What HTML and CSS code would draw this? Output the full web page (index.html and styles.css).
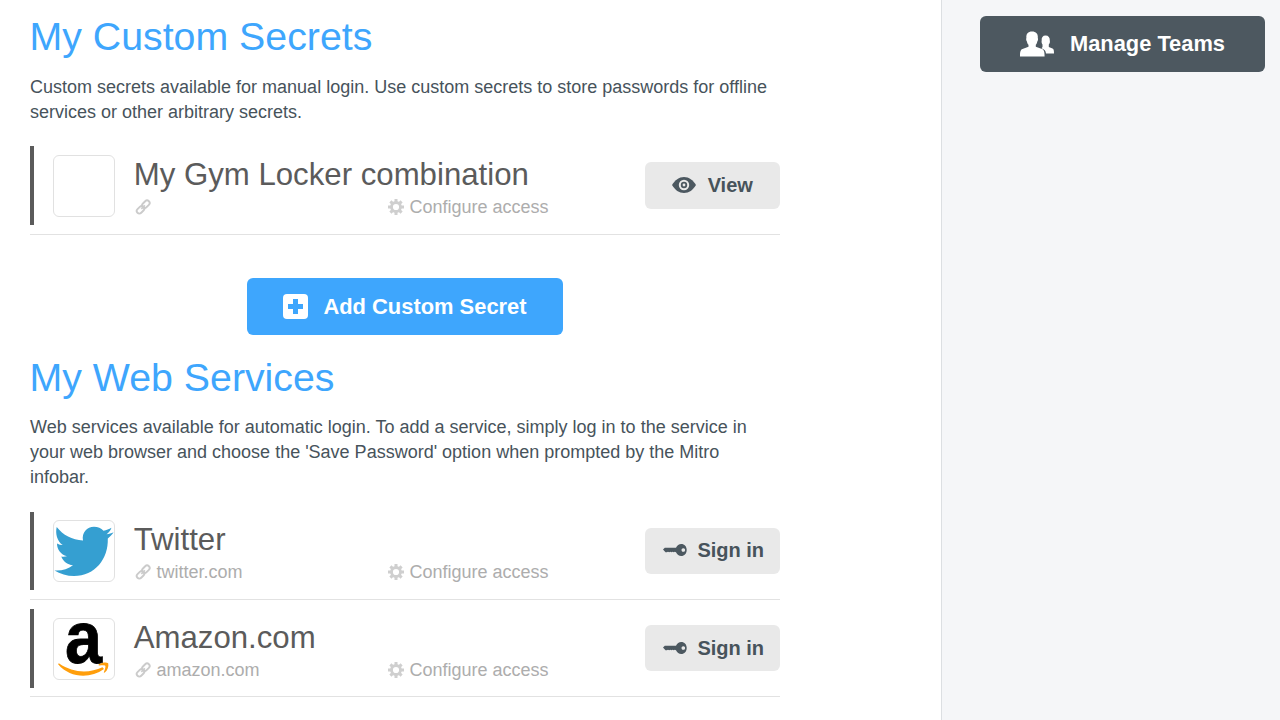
FILE: index.html
```html
<!DOCTYPE html>
<html lang="en">
<head>
<meta charset="utf-8">
<title>Secrets</title>
<link rel="stylesheet" href="styles.css">
</head>
<body>
<svg class="defs" width="0" height="0">
  <symbol id="link" viewBox="0 0 16 16">
    <g fill="none" stroke="#cbcbcb" stroke-width="1.900">
      <rect x="6.700" y="2.600" width="8.400" height="5.200" rx="2.600" transform="rotate(-45 10.900 5.200)"/>
      <rect x="1.300" y="8.200" width="8.400" height="5.200" rx="2.600" transform="rotate(-45 5.500 10.800)"/>
      <path d="M6.300 9.900l3.600-3.600" stroke-width="1.700"/>
    </g>
  </symbol>
  <symbol id="gear" viewBox="0 0 16 16">
    <circle cx="8" cy="8" r="4.500" fill="none" stroke="#cfcfcf" stroke-width="2.800"/>
    <path d="M8 0v3M8 13v3M0 8h3M13 8h3M2.400 2.400l2 2M11.600 11.600l2 2M2.400 13.600l2-2M11.600 4.400l2-2" stroke="#cfcfcf" stroke-width="3"/>
  </symbol>
  <symbol id="key" viewBox="0 0 24 14">
    <path fill="#4c5860" fill-rule="evenodd" d="M0 6.600L1.800 4.800H13C14 2.500 16 1 18.200 1C21.500 1 23.700 3.600 23.700 7S21.500 13 18.200 13C16 13 14 11.600 13 9.200L11.800 8.700L10.800 9.200L9.600 8.700L8.500 9.200L7.300 8.700L6.200 9.200L5 8.700L3.800 9.200H2.500ZM20.300 5.200a1.800 1.800 0 1 0 .01 0Z"/>
  </symbol>
</svg>
<div class="page">
  <main class="main">
    <section class="section">
      <h1 class="heading">My Custom Secrets</h1>
      <p class="intro first">Custom secrets available for manual login. Use custom secrets to store passwords for offline<br>services or other arbitrary secrets.</p>
      <div class="row">
        <div class="item">
          <div class="tile"></div>
          <div class="info">
            <h2 class="title">My Gym Locker combination</h2>
            <div class="meta">
              <span class="site"><svg class="ico"><use href="#link"/></svg></span>
              <span class="config"><svg class="ico"><use href="#gear"/></svg>Configure access</span>
            </div>
          </div>
          <button class="btn view"><svg class="eye" viewBox="0 0 24 16"><path fill="#4c5860" d="M0 8C3 3 7 0 12 0S21 3 24 8C21 13 17 16 12 16S3 13 0 8Z"/><circle cx="12" cy="8" r="4.200" fill="none" stroke="#e9e9e9" stroke-width="2"/><circle cx="12" cy="8" r="1.400" fill="#e9e9e9"/></svg>View</button>
        </div>
      </div>
      <button class="add"><svg class="plus" viewBox="0 0 25 25"><rect width="25" height="25" rx="4" fill="#fff"/><path d="M12.500 5v15M5 12.500h15" stroke="#3ea6fd" stroke-width="5"/></svg>Add Custom Secret</button>
    </section>
    <section class="section services">
      <h1 class="heading">My Web Services</h1>
      <p class="intro">Web services available for automatic login. To add a service, simply log in to the service in<br>your web browser and choose the 'Save Password' option when prompted by the Mitro<br>infobar.</p>
      <div class="row short">
        <div class="item">
          <div class="tile"><svg class="logo" viewBox="0 0 62 62"><path fill="#359fd1" d="M3.700 7C10 15 19 20 30 20.500C28.500 12.500 34 6.700 41 6.700C45 6.700 48 8.200 50.500 10.800C53.500 10.300 56 9.200 58.500 7.800C57.500 10.800 55.700 12.700 53.500 14.200C56 14 58.500 13.200 60.600 12.300C59 14.700 57.200 16.700 54.800 18.500C55.500 39 42 56 21 56C14 56 7 54 1.500 50.500C8.500 51 15 49.200 20 45.200C14.300 44.800 10 41.300 8.300 36.500C10.300 36.800 12.200 36.700 14 36.200C7.800 34.700 4 29.500 4 23.500C5.800 24.500 7.700 25 9.700 25.100C4 21 2.200 13.500 3.700 7Z"/></svg></div>
          <div class="info">
            <h2 class="title">Twitter</h2>
            <div class="meta">
              <span class="site"><svg class="ico"><use href="#link"/></svg>twitter.com</span>
              <span class="config"><svg class="ico"><use href="#gear"/></svg>Configure access</span>
            </div>
          </div>
          <button class="btn"><svg class="key"><use href="#key"/></svg>Sign in</button>
        </div>
      </div>
      <div class="row last">
        <div class="item">
          <div class="tile"><svg class="logo" viewBox="0 0 62 62"><text class="mark" x="12" y="44.500" textLength="37" lengthAdjust="spacingAndGlyphs">a</text><path fill="#ff9e0b" d="M6.200 45.500C20 55 36 55.500 49.500 49.200L51 51C37 61 17 60 5.300 46.500C5 45.700 5.500 45.200 6.200 45.500ZM46 46.300C49.500 44.200 53.500 44 55.200 45.200C56 48.500 54.500 52.200 51.800 54.600C51 55 50.600 54.600 51 53.800C52 51.300 52.800 48.800 52.300 47.800C51.300 46.900 48.800 47.100 46.400 47.400C45.400 47.500 45.300 46.800 46 46.300Z"/></svg></div>
          <div class="info">
            <h2 class="title">Amazon.com</h2>
            <div class="meta">
              <span class="site"><svg class="ico"><use href="#link"/></svg>amazon.com</span>
              <span class="config"><svg class="ico"><use href="#gear"/></svg>Configure access</span>
            </div>
          </div>
          <button class="btn"><svg class="key"><use href="#key"/></svg>Sign in</button>
        </div>
      </div>
    </section>
  </main>
  <aside class="side">
    <button class="teams"><svg class="people" viewBox="0 0 34 26" fill="#fff"><path d="M25.500 4.500C28.500 4.500 30 6.500 29.800 9.500C30.200 11.500 29.500 12.500 28.800 13.500V16L32.500 17.500C33.700 18 34 19.500 34 22.500H26C25.800 20 24.500 18.300 21.500 17.200L22.500 16V13.500C21.800 12.500 21.300 11 21.700 9.500C21.300 6.500 22.800 4.500 25.500 4.500Z"/><path d="M12 .5C16 .5 18.200 2.800 17.800 7C18.300 8 18 9.500 17.300 10.500C17 12 16.500 13 15.800 13.800V15.800L22 18C24 18.800 24.600 20.500 24.600 25.500H0C0 20.500 .5 18.800 2.500 18L8.500 15.800V13.800C7.700 13 7.200 12 6.900 10.500C6.200 9.500 5.900 8 6.400 7C6 2.800 8 .5 12 .5Z"/></svg>Manage Teams</button>
  </aside>
</div>
</body>
</html>
```
FILE: styles.css
```css
* { box-sizing: border-box; }
body {
  margin: 0;
  height: 720px;
  overflow: hidden;
  background: #fff;
  font-family: "Liberation Sans", Arial, sans-serif;
  color: #47535b;
}
.defs { display: block; }
.page { display: flex; height: 720px; }
.main { width: 941px; padding: 13px 0 0 30px; }
.section { width: 750px; }
.heading {
  margin: 0 0 0 -0.500px;
  height: 61px;
  font-size: 39.300px;
  font-weight: 400;
  line-height: 46px;
  color: #3ea6fd;
  white-space: nowrap;
}
.intro {
  margin: 0 0 22px;
  font-size: 18px;
  line-height: 25px;
  white-space: nowrap;
}
.first { padding-top: 1px; margin-bottom: 21px; }
.row { padding-bottom: 9px; border-bottom: 1px solid #e2e2e2; }
.item {
  display: flex;
  height: 79px;
  padding-top: 9px;
  border-left: 4px solid #5b5b5b;
}
.short { margin-bottom: 9px; }
.short .item { height: 78px; padding-top: 8px; }
.last { padding-bottom: 8px; }
.tile {
  width: 62px;
  height: 62px;
  margin-left: 19px;
  border: 1px solid #e1e1e1;
  border-radius: 6px;
}
.logo { display: block; width: 62px; height: 62px; margin: -1px; overflow: visible; }
.mark {
  font-family: "Liberation Sans", Arial, sans-serif;
  font-size: 74px;
  font-weight: 700;
  stroke: #000;
  stroke-width: 0.800px;
}
.info { width: 511px; padding: 1px 0 0 18.700px; }
.title {
  margin: 0;
  font-size: 31.200px;
  font-weight: 400;
  line-height: 38px;
  color: #5b5b5b;
  white-space: nowrap;
}
.meta { display: flex; height: 26px; font-size: 18px; line-height: 26px; color: #adadad; }
.site { display: flex; align-items: center; gap: 5px; width: 254.300px; padding-left: 1.800px; }
.config { display: flex; align-items: center; gap: 5.500px; }
.ico { width: 16px; height: 16px; margin-top: -1px; }
.btn, .add, .teams {
  display: flex;
  align-items: center;
  justify-content: center;
  padding: 0;
  border: 0;
  border-radius: 6px;
  font: 700 20px/24px "Liberation Sans", Arial, sans-serif;
  white-space: nowrap;
}
.btn {
  width: 135px;
  height: 46px;
  margin: 8px 0 0 auto;
  padding: 0 0 1px 2px;
  gap: 10.500px;
  background: #e9e9e9;
  color: #47535b;
}
.short .btn { padding-bottom: 2px; }
.view { height: 47px; margin-top: 7px; padding-left: 0; gap: 11.500px; }
.last .btn { margin-top: 7px; padding-bottom: 0; }
.eye { width: 24px; height: 16px; }
.key { width: 24px; height: 14px; }
.add {
  width: 316px;
  height: 57px;
  margin: 43px 0 0 217px;
  background: #3ea6fd;
  color: #fff;
  font-size: 21.900px;
  gap: 15px;
}
.plus { width: 25px; height: 25px; margin-top: -1px; }
.services { margin-top: 19px; }
.side {
  flex: 1;
  padding: 16px 15px 0 38px;
  border-left: 1px solid #dcdfe2;
  background: #f5f6f8;
}
.teams { width: 285px; height: 56px; background: #4d5860; color: #fff; font-size: 21.850px; gap: 16px; }
.people { width: 34px; height: 26px; margin-top: -1px; }
```
